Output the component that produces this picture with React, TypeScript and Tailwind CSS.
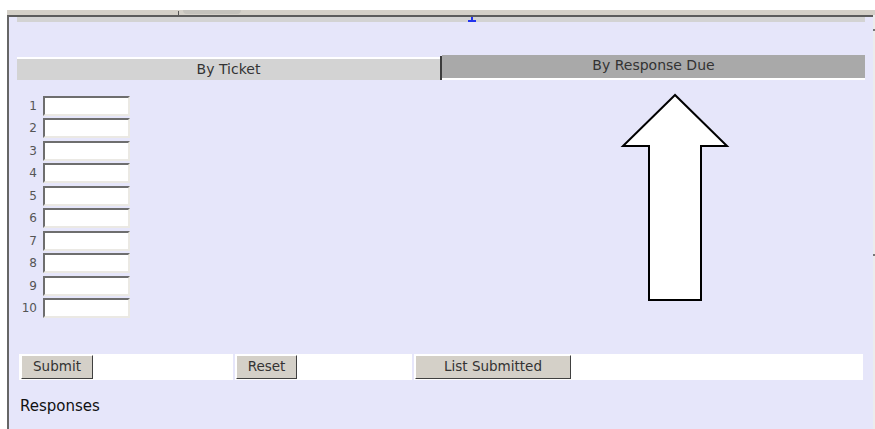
import React from 'react'

const font = { fontFamily: '"DejaVu Sans", Verdana, sans-serif' }

const rows = [1, 2, 3, 4, 5, 6, 7, 8, 9, 10]

const UpArrow = () => (
  <svg width="122" height="215" viewBox="0 0 122 215" className="absolute left-[601px] top-[73px]">
    <polygon
      points="65,5 13,56 39,56 39,210 91,210 91,56 117,56"
      fill="white"
      stroke="black"
      strokeWidth="2"
      strokeLinejoin="miter"
    />
  </svg>
)

const Button = ({ label, width }: { label: string; width: string }) => (
  <button
    className={`${width} h-[24px] bg-[#d4d0c8] border border-t-white border-l-white border-b-[#404040] border-r-[#404040] text-[13.5px] text-[#333] leading-none`}
    style={font}
  >
    {label}
  </button>
)

export default function App() {
  return (
    <div className="w-[875px] h-[429px] bg-white overflow-hidden flex flex-col" style={font}>
      <div className="h-[10px]" />
      <div className="ml-[7px] h-[5px] bg-[#d4d0c8] relative">
        <div className="absolute left-[171px] top-[1px] w-[1px] h-[4px] bg-[#555]" />
        <div className="absolute left-[176px] top-0 w-[58px] h-[4px] bg-[#c4c2bc] rounded-b-sm" />
      </div>
      <div className="flex">
        <div className="relative ml-[7px] w-[866px] h-[414px] bg-[#e6e6fa] border-l-2 border-t-2 border-l-[#666] border-t-[#5c5c5c]">
          <div className="ml-[8px] w-[848px] h-[5px] bg-[#d3d3d3] relative">
            <div className="absolute left-[454px] top-0 w-[2px] h-[5px] bg-[#2233ee]" />
            <div className="absolute left-[451px] top-[3px] w-[8px] h-[2px] bg-[#2233ee]" />
          </div>

          {/* tabs */}
          <div className="ml-[8px] mt-[33px] w-[848px] h-[25px] flex text-[14px] text-[#333]">
            <div className="w-[423px] h-[23px] mt-[2px] bg-[#d3d3d3] border-t-2 border-t-white flex items-center justify-center">
              By Ticket
            </div>
            <div className="w-[2px] h-[24px] mt-[1px] bg-[#3c3c3c]" />
            <div className="w-[423px] h-[25px] bg-[#a9a9a9] border-b-2 border-b-white flex items-center justify-center pb-[3px]">
              By Response Due
            </div>
          </div>

          {/* numbered entries */}
          <div className="mt-[16px] ml-[10px] flex flex-col gap-[2.45px]">
            {rows.map(n => (
              <div key={n} className="flex items-center h-[20px]">
                <span className="w-[19px] text-right text-[12px] text-[#555] pr-[1px]">{n}</span>
                <input
                  className="ml-[5px] w-[87px] h-[20px] bg-white border-2 border-t-[#6e6e6e] border-l-[#6e6e6e] border-b-[#ebe9e4] border-r-[#ebe9e4] outline-none"
                  type="text"
                />
              </div>
            ))}
          </div>

          {/* actions */}
          <div className="mt-[36px] ml-[10px] w-[844px] h-[26px] flex gap-[2px]">
            <div className="w-[214px] bg-white flex items-center pl-[2px]">
              <Button label="Submit" width="w-[72px]" />
            </div>
            <div className="w-[177px] bg-white flex items-center pl-[1px]">
              <Button label="Reset" width="w-[61px]" />
            </div>
            <div className="flex-1 bg-white flex items-center pl-[1px]">
              <Button label="List Submitted" width="w-[156px]" />
            </div>
          </div>

          <div className="mt-[15px] ml-[11px] text-[15px] text-[#111]">Responses</div>

          <UpArrow />
        </div>
        <div className="w-[2px] bg-[#ececec] relative">
          <div className="absolute top-[14px] left-0 w-[2px] h-[2px] bg-[#777]" />
          <div className="absolute top-[239px] left-0 w-[2px] h-[2px] bg-[#777]" />
        </div>
      </div>
    </div>
  )
}
